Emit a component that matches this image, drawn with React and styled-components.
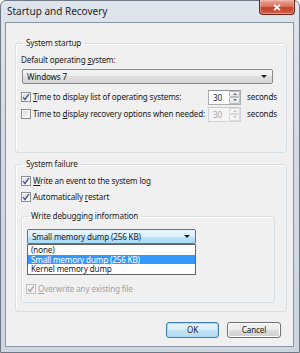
import React from "react";
import styled, { createGlobalStyle } from "styled-components";

const Global = createGlobalStyle`
  html, body { margin: 0; padding: 0; background: #fff; }
  body { width: 300px; height: 353px; overflow: hidden; font-family: "Noto Sans", "Open Sans", sans-serif; font-size: 8.1px; letter-spacing: -0.15px; color: #1b1b1b; }
  * { box-sizing: border-box; }
`;

const Window = styled.div`
  width: 300px;
  height: 353px;
  border: 1px solid #6f7985;
  border-radius: 6px 6px 0 0;
  background: linear-gradient(#dfe5ec, #d3dae3 40%, #cdd5de);
  display: flex;
  flex-direction: column;
  padding: 0 5px 5px 4px;
`;

const TitleBar = styled.div`
  height: 21px;
  display: flex;
  justify-content: space-between;
  align-items: flex-start;
`;

const Title = styled.div`
  padding: 4px 0 0 2px;
  line-height: 12px;
  font-size: 10px;
  letter-spacing: 0;
  color: #1e1e1e;
`;

const CloseButton = styled.div`
  width: 36px;
  height: 15px;
  margin: -1px -1px 0 0;
  border: 1px solid #6b2418;
  border-top: none;
  border-radius: 0 0 4px 4px;
  background: linear-gradient(#e9a99b, #d8745f 45%, #c2412b 55%, #cf6148);
  box-shadow: inset 0 0 0 1px rgba(255, 200, 190, 0.5);
  display: flex;
  align-items: center;
  justify-content: center;
`;

const Client = styled.div`
  flex: 1;
  background: #f0f0f0;
  border: 1px solid #8995a2;
  padding: 14px 12px 8px 9px;
  display: flex;
  flex-direction: column;
`;

const Group = styled.fieldset`
  margin: ${(p) => p.$mt || 0}px ${(p) => (p.$inner ? 0 : -3)}px 0 0;
  width: ${(p) => p.$w}px;
  padding: ${(p) => p.$pt}px 0 ${(p) => p.$pb}px ${(p) => p.$pl}px;
  border: 1px solid #d5dfe5;
  border-radius: 3px;
  box-shadow: inset 1px 1px 0 #fff;
  min-width: 0;
`;

const Legend = styled.legend`
  margin-left: 2px;
  padding: 0 3px;
  line-height: 12px;
  color: #1b1b1b;
`;

const Label = styled.div`
  line-height: 12px;
  color: ${(p) => (p.$disabled ? "#a3a3a3" : "#1b1b1b")};
  white-space: nowrap;
`;

const U = styled.span`
  text-decoration: underline;
  text-underline-offset: 1px;
`;

const Combo = styled.div`
  position: relative;
  margin: ${(p) => p.$mt || 0}px 0 0 1px;
  width: ${(p) => p.$w}px;
  height: 15px;
  border: 1px solid ${(p) => (p.$active ? "#3c7fb1" : "#8a8a8a")};
  border-radius: 2px;
  background: ${(p) =>
    p.$active
      ? "linear-gradient(#eaf6fd, #d9f0fc 50%, #bee6fd 50%, #a7d9f5)"
      : "linear-gradient(#f4f4f4, #ececec 50%, #dfdfdf 50%, #d6d6d6)"};
  display: flex;
  align-items: center;
  justify-content: space-between;
  padding: 0 5px 0 4px;
  line-height: 12px;
`;

const Arrow = styled.span`
  width: 0;
  height: 0;
  border-left: 3px solid transparent;
  border-right: 3px solid transparent;
  border-top: 3px solid #1b1b1b;
`;

const CheckRow = styled.div`
  display: grid;
  grid-template-columns: 187px 33px auto;
  align-items: center;
  height: 16px;
  margin-top: ${(p) => p.$mt || 0}px;
`;

const CheckLine = styled.div`
  display: flex;
  align-items: center;
  gap: 2px;
  height: 16px;
  margin-top: ${(p) => p.$mt || 0}px;
`;

const Box = styled.span`
  width: 10px;
  height: 10px;
  flex: none;
  border: 1px solid ${(p) => (p.$disabled ? "#c2c2c2" : "#8e8f8f")};
  background: ${(p) =>
    p.$disabled
      ? "#f4f4f4"
      : "linear-gradient(135deg, #d4d7dc, #f4f4f4 70%, #fbfbfb)"};
  box-shadow: inset 0 0 0 1px ${(p) => (p.$disabled ? "#f4f4f4" : "#f7f7f7")};
  display: flex;
  align-items: center;
  justify-content: center;
`;

const Seconds = styled.span`
  margin-left: 6px;
  line-height: 12px;
`;

const Spinner = styled.div`
  width: 33px;
  height: 15px;
  border: 1px solid ${(p) => (p.$disabled ? "#d2d4d7" : "#abadb3")};
  border-top-color: ${(p) => (p.$disabled ? "#c9cbce" : "#8f9196")};
  background: ${(p) => (p.$disabled ? "#f4f4f4" : "#fff")};
  display: flex;
  align-items: stretch;
  justify-content: space-between;
  padding: 0 0 0 4px;
`;

const SpinValue = styled.span`
  line-height: 13px;
  color: ${(p) => (p.$disabled ? "#a3a3a3" : "#1b1b1b")};
`;

const SpinButtons = styled.div`
  width: 11px;
  display: flex;
  flex-direction: column;
`;

const SpinButton = styled.div`
  flex: 1;
  border: 1px solid ${(p) => (p.$disabled ? "#dadada" : "#b8bcc2")};
  border-radius: 1px;
  background: ${(p) => (p.$disabled ? "#f4f4f4" : "linear-gradient(#f8f8f8, #e2e4e8)")};
  display: flex;
  align-items: center;
  justify-content: center;
`;

const SmallArrow = styled.span`
  width: 0;
  height: 0;
  border-left: 2px solid transparent;
  border-right: 2px solid transparent;
  ${(p) => (p.$up ? "border-bottom" : "border-top")}: 2px solid
    ${(p) => (p.$disabled ? "#c4c4c4" : "#5a6a80")};
`;

const List = styled.div`
  margin-left: 1px;
  width: 169px;
  border: 1px solid #646464;
  background: #fff;
  padding: 0;
`;

const Item = styled.div`
  height: 9.6px;
  line-height: 9.6px;
  padding-left: 3px;
  background: ${(p) => (p.$selected ? "#3399ff" : "transparent")};
  color: ${(p) => (p.$selected ? "#fff" : "#1b1b1b")};
`;

const Buttons = styled.div`
  margin-top: 10px;
  display: flex;
  justify-content: flex-end;
  gap: 8px;
`;

const Button = styled.div`
  width: ${(p) => p.$w}px;
  height: 16px;
  border: 1px solid ${(p) => (p.$default ? "#3c7fb1" : "#707070")};
  border-radius: 3px;
  background: ${(p) =>
    p.$default
      ? "linear-gradient(#e5f4fc, #d9eef9 50%, #c3e3f5 50%, #b6dbf1)"
      : "linear-gradient(#f2f2f2, #ebebeb 50%, #dddddd 50%, #cfcfcf)"};
  box-shadow: inset 0 0 0 1px ${(p) => (p.$default ? "#a8dcf6" : "#fcfcfc")};
  display: flex;
  align-items: center;
  justify-content: center;
  line-height: 12px;
`;

const Check = ({ disabled }) => (
  <svg width="8" height="8" viewBox="0 0 8 8">
    <path
      d="M1 4.2 L3 6.5 L7 0.8"
      fill="none"
      stroke={disabled ? "#a8a8a8" : "#4a5f8f"}
      strokeWidth="1.4"
    />
  </svg>
);

const CheckBox = ({ checked, disabled }) => (
  <Box $disabled={disabled}>{checked && <Check disabled={disabled} />}</Box>
);

const Spin = ({ disabled }) => (
  <Spinner $disabled={disabled}>
    <SpinValue $disabled={disabled}>30</SpinValue>
    <SpinButtons>
      <SpinButton $disabled={disabled}>
        <SmallArrow $up $disabled={disabled} />
      </SpinButton>
      <SpinButton $disabled={disabled}>
        <SmallArrow $disabled={disabled} />
      </SpinButton>
    </SpinButtons>
  </Spinner>
);

export default function App() {
  return (
    <>
      <Global />
      <Window>
        <TitleBar>
          <Title>Startup and Recovery</Title>
          <CloseButton>
            <svg width="8" height="7" viewBox="0 0 8 7">
              <path d="M1 0.8 L7 6.2 M7 0.8 L1 6.2" stroke="#fff" strokeWidth="1.8" />
            </svg>
          </CloseButton>
        </TitleBar>
        <Client>
          <Group $w={272} $pt={5} $pb={30} $pl={5}>
            <Legend>System startup</Legend>
            <Label>
              Default operating <U>s</U>ystem:
            </Label>
            <Combo $w={251} $mt={3}>
              <span>Windows 7</span>
              <Arrow />
            </Combo>
            <CheckRow $mt={5}>
              <CheckLine>
                <CheckBox checked />
                <Label>
                  <U>T</U>ime to display list of operating systems:
                </Label>
              </CheckLine>
              <Spin />
              <Seconds>seconds</Seconds>
            </CheckRow>
            <CheckRow $mt={1}>
              <CheckLine>
                <CheckBox />
                <Label>
                  Time to <U>d</U>isplay recovery options when needed:
                </Label>
              </CheckLine>
              <Spin disabled />
              <Seconds>seconds</Seconds>
            </CheckRow>
          </Group>

          <Group $w={272} $mt={5} $pt={3} $pb={8} $pl={5}>
            <Legend>System failure</Legend>
            <CheckLine>
              <CheckBox checked />
              <Label>
                <U>W</U>rite an event to the system log
              </Label>
            </CheckLine>
            <CheckLine>
              <CheckBox checked />
              <Label>
                Automatically <U>r</U>estart
              </Label>
            </CheckLine>
            <Group $inner $w={254} $mt={5} $pt={7} $pb={5} $pl={4}>
              <Legend>Write debugging information</Legend>
              <Combo $w={169} $active>
                <span>Small memory dump (256 KB)</span>
                <Arrow />
              </Combo>
              <List>
                <Item>(none)</Item>
                <Item $selected>Small memory dump (256 KB)</Item>
                <Item>Kernel memory dump</Item>
              </List>
              <CheckLine $mt={6}>
                <CheckBox checked disabled />
                <Label $disabled>
                  <U>O</U>verwrite any existing file
                </Label>
              </CheckLine>
            </Group>
          </Group>

          <Buttons>
            <Button $w={53} $default>OK</Button>
            <Button $w={54}>Cancel</Button>
          </Buttons>
        </Client>
      </Window>
    </>
  );
}
